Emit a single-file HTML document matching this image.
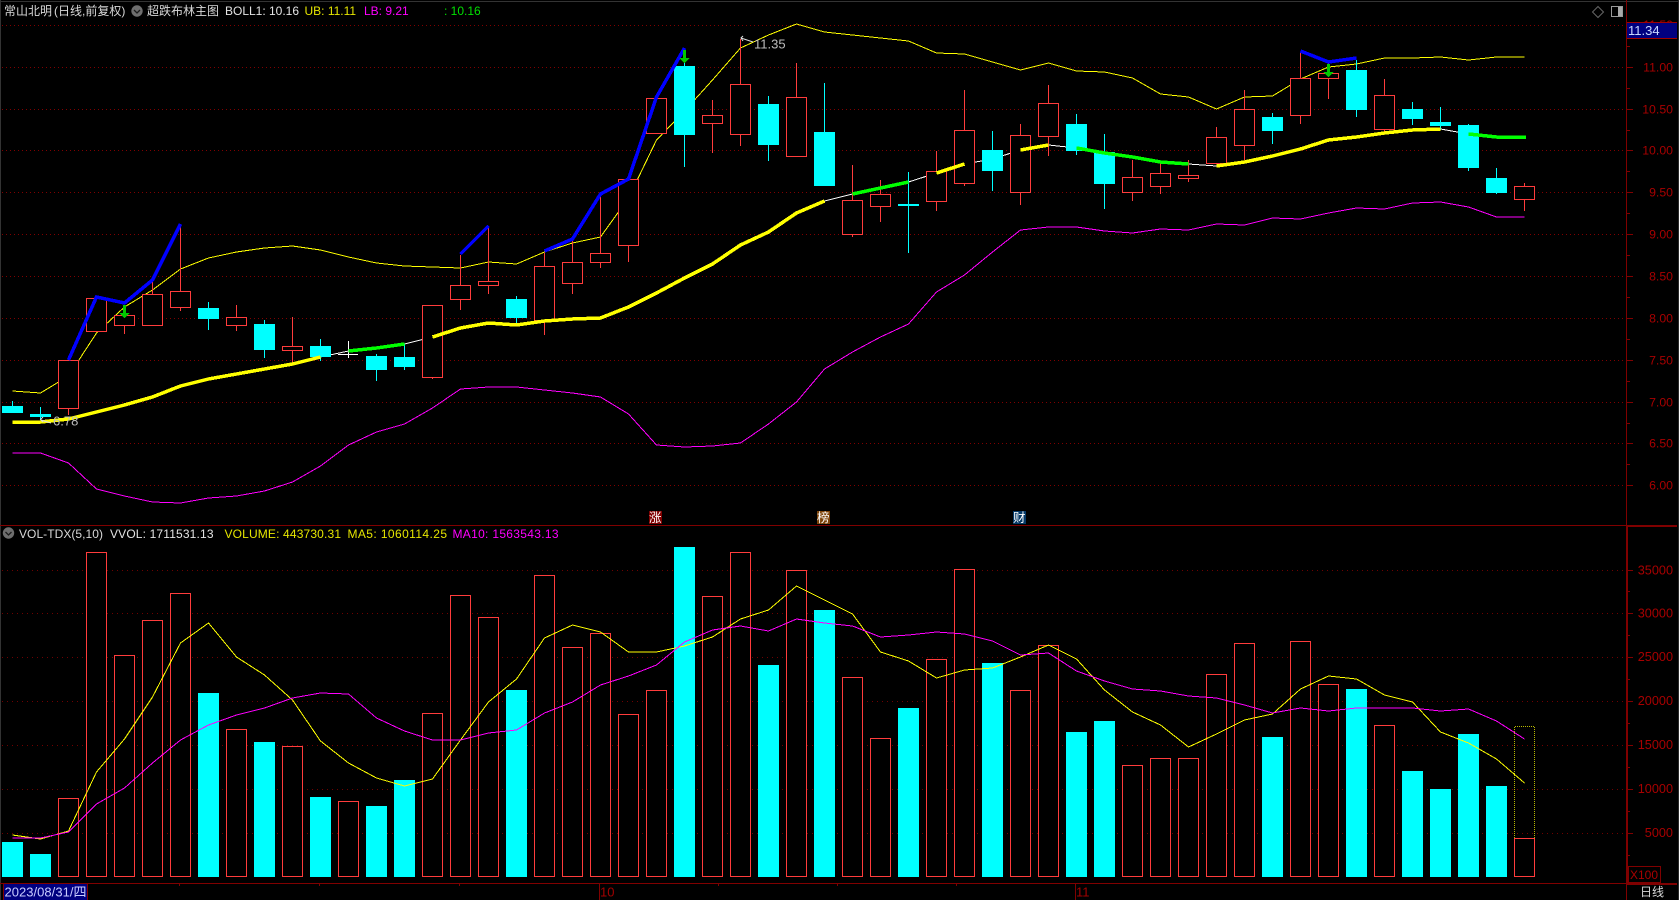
<!DOCTYPE html>
<html lang="zh">
<head>
<meta charset="utf-8">
<title>常山北明 日线</title>
<style>
html,body{margin:0;padding:0;background:#000;width:1679px;height:900px;overflow:hidden}
svg{position:absolute;left:0;top:0;display:block}
text{font-family:"Liberation Sans","Noto Sans CJK SC",sans-serif;font-size:12px}
.ax{fill:#a80000;text-anchor:end;font-size:12.3px}
.av{fill:#a80000;text-anchor:end;font-size:12.7px}
.g{fill:none;stroke-width:1}
.c{shape-rendering:crispEdges}
</style>
</head>
<body>
<svg width="1679" height="900" viewBox="0 0 1679 900" xmlns="http://www.w3.org/2000/svg">
<rect width="1679" height="900" fill="#000"/>
<g class="c">
<rect x="0" y="1" width="1679" height="1" fill="#333"/>
<rect x="0" y="0" width="1" height="900" fill="#333"/>
<rect x="1678" y="0" width="1" height="900" fill="#2a2a2a"/>
<!-- price grid -->
<path d="M2 25.5H1626M2 67.5H1626M2 109.5H1626M2 150.5H1626M2 192.5H1626M2 234.5H1626M2 276.5H1626M2 318.5H1626M2 360.5H1626M2 402.5H1626M2 443.5H1626M2 485.5H1626" stroke="#800000" stroke-width="1" stroke-dasharray="1 3" fill="none"/>
<!-- vol grid -->
<path d="M2 570.5H1626M2 613.5H1626M2 657.5H1626M2 701.5H1626M2 745.5H1626M2 789.5H1626M2 833.5H1626" stroke="#700000" stroke-width="1" stroke-dasharray="1 4" fill="none"/>
<!-- frame -->
<rect x="0" y="525" width="1626" height="1" fill="#800000"/>
<rect x="1626" y="525" width="51" height="2" fill="#800000"/>
<rect x="1626" y="0" width="1" height="525" fill="#800000"/>
<rect x="1626" y="525" width="2" height="359" fill="#800000"/>
<rect x="0" y="883" width="1677" height="1" fill="#800000"/>
<rect x="1626" y="883" width="51" height="2" fill="#800000"/>
<rect x="1626" y="884" width="1" height="16" fill="#800000"/>
<!-- axis ticks -->
<path d="M1627 46.5h3M1627 67.5h6M1627 88.5h3M1627 109.5h6M1627 130.5h3M1627 150.5h6M1627 171.5h3M1627 192.5h6M1627 213.5h3M1627 234.5h6M1627 255.5h3M1627 276.5h6M1627 297.5h3M1627 318.5h6M1627 339.5h3M1627 360.5h6M1627 381.5h3M1627 402.5h6M1627 423.5h3M1627 443.5h6M1627 464.5h3M1627 485.5h6M1627 570.5h6M1627 591.5h3M1627 613.5h6M1627 635.5h3M1627 657.5h6M1627 679.5h3M1627 701.5h6M1627 723.5h3M1627 745.5h6M1627 767.5h3M1627 789.5h6M1627 811.5h3M1627 833.5h6M1627 855.5h3" stroke="#800000" fill="none"/>
<!-- time ticks -->
<path d="M179.5 884v2M319.5 884v2M459.5 884v2M718.5 884v2M837.5 884v2M956.5 884v2M599.5 884v16M1075.5 884v16" stroke="#800000" fill="none"/>
</g>

<!-- thin BOLL lines -->
<g class="c g">
<polyline stroke="#ffff00" fill="none" points="12.5,391 40.5,393 68.5,376 96.5,333 124.5,307 152.5,290 180.5,269 208.5,258 236.5,252 264.5,248 292.5,246 320.5,250 348.5,257 376.5,263 404.5,266 432.5,267 460.5,268 488.5,262 516.5,264 544.5,252 572.5,243 600.5,237 628.5,198 656.5,140 684.5,111 712.5,80 740.5,48 768.5,35 796.5,24 824.5,32 852.5,35 880.5,38 908.5,41 936.5,53 964.5,54 992.5,62 1020.5,70 1048.5,63 1076.5,71 1104.5,72 1132.5,78 1160.5,94 1188.5,97 1216.5,109 1244.5,97 1272.5,96 1300.5,79 1328.5,67 1356.5,64 1384.5,58 1412.5,58 1440.5,57 1468.5,60 1496.5,57 1524.5,57"/>
<polyline stroke="#ff00ff" fill="none" points="12.5,453 40.5,453 68.5,463 96.5,489 124.5,496 152.5,502 180.5,503 208.5,498 236.5,496 264.5,491 292.5,482 320.5,466 348.5,445 376.5,432 404.5,424 432.5,408 460.5,389 488.5,387 516.5,387 544.5,390 572.5,393 600.5,397 628.5,414 656.5,445 684.5,447 712.5,446 740.5,443 768.5,424 796.5,402 824.5,369 852.5,352 880.5,337 908.5,324 936.5,292 964.5,275 992.5,252 1020.5,230 1048.5,227 1076.5,227 1104.5,231 1132.5,233 1160.5,229 1188.5,230 1216.5,224 1244.5,225 1272.5,218 1300.5,219 1328.5,213 1356.5,208 1384.5,209 1412.5,203 1440.5,202 1468.5,207 1496.5,217 1524.5,217"/>
<path d="M320.5 357L348.5 351M404.5 344L432.5 337M824.5 201L852.5 194M908.5 182L936.5 173M964.5 164L992.5 159L1020.5 150M1048.5 145L1076.5 148M1188.5 164L1216.5 166M1440.5 129L1468.5 134" stroke="#fff" fill="none"/>
</g>

<!-- white doji -->
<path class="c" d="M348.5 341V358M338 354.5H358" stroke="#fff" fill="none"/>

<!-- wicks -->
<path class="c" fill="none" stroke="#ff3c3c" d="M68.5 360V415M96.5 298V332M124.5 305V334M152.5 282V326M180.5 224V311M236.5 305V331M292.5 317V363M432.5 305V379M460.5 255V310M488.5 226V294M544.5 253V335M572.5 239V294M600.5 194V268M628.5 179V262M656.5 98V134M712.5 100V153M740.5 39V146M796.5 63V157M852.5 165V237M880.5 180V222M936.5 151V211M964.5 90V186M1020.5 124V205M1048.5 85V156M1132.5 160V201M1160.5 163V194M1188.5 160V182M1216.5 127V164M1244.5 90V160M1300.5 52V124M1328.5 63V99M1384.5 79V132M1524.5 183V211"/>
<path class="c" fill="none" stroke="#00ffff" d="M12.5 401V413M40.5 407V420M208.5 302V330M264.5 320V358M320.5 339V361M376.5 354V381M404.5 344V370M516.5 296V324M684.5 48V167M768.5 96V161M824.5 83V186M908.5 172V253M992.5 131V191M1076.5 114V155M1104.5 134V209M1272.5 113V144M1356.5 60V117M1412.5 102V125M1440.5 107V130M1468.5 124V171M1496.5 168V194"/>

<!-- red bodies -->
<path class="c" fill="#000" stroke="#ff3c3c" d="M58.5 360.5h20v48h-20zM86.5 298.5h20v33h-20zM114.5 315.5h20v10h-20zM142.5 294.5h20v31h-20zM170.5 291.5h20v16h-20zM226.5 317.5h20v8h-20zM282.5 346.5h20v4h-20zM422.5 305.5h20v72h-20zM450.5 285.5h20v14h-20zM478.5 281.5h20v4h-20zM534.5 266.5h20v54h-20zM562.5 262.5h20v21h-20zM590.5 253.5h20v9h-20zM618.5 179.5h20v66h-20zM646.5 98.5h20v35h-20zM702.5 115.5h20v8h-20zM730.5 84.5h20v50h-20zM786.5 97.5h20v59h-20zM842.5 200.5h20v34h-20zM870.5 194.5h20v12h-20zM926.5 171.5h20v30h-20zM954.5 130.5h20v53h-20zM1010.5 135.5h20v57h-20zM1038.5 103.5h20v33h-20zM1122.5 177.5h20v15h-20zM1150.5 173.5h20v13h-20zM1178.5 175.5h20v3h-20zM1206.5 137.5h20v26h-20zM1234.5 109.5h20v36h-20zM1290.5 78.5h20v37h-20zM1318.5 73.5h20v5h-20zM1374.5 95.5h20v34h-20zM1514.5 186.5h20v13h-20z"/>
<!-- cyan bodies -->
<path class="c" fill="#00ffff" d="M2 406h21v7H2zM30 414h21v3H30zM198 308h21v11h-21zM254 324h21v26h-21zM310 346h21v11h-21zM366 356h21v14h-21zM394 357h21v10h-21zM506 299h21v19h-21zM674 66h21v69h-21zM758 104h21v41h-21zM814 132h21v54h-21zM898 204h21v2h-21zM982 150h21v21h-21zM1066 124h21v27h-21zM1094 152h21v32h-21zM1262 117h21v14h-21zM1346 70h21v40h-21zM1402 109h21v10h-21zM1430 122h21v4h-21zM1458 125h21v43h-21zM1486 178h21v15h-21z"/>

<!-- thick mid BOLL segments -->
<g class="c" fill="none" stroke-width="3.5">
<path stroke="#ffff00" d="M12.5 422H40.5L68.5 419L96.5 412L124.5 405L152.5 397L180.5 386L208.5 379L236.5 374L264.5 369L292.5 364L320.5 357M432.5 337L460.5 328L488.5 323L516.5 325L544.5 321L572.5 319L600.5 318L628.5 307L656.5 293L684.5 278L712.5 264L740.5 245L768.5 232L796.5 213L824.5 201M936.5 173L964.5 164M1020.5 150L1048.5 145M1216.5 166L1244.5 162L1272.5 156L1300.5 149L1328.5 140L1356.5 137L1384.5 133L1412.5 130L1440.5 129"/>
<path stroke="#00ff00" d="M348.5 351L376.5 348L404.5 344M852.5 194L880.5 188L908.5 182M1076.5 148L1104.5 153L1132.5 157L1160.5 162L1188.5 164M1468.5 134L1496.5 137L1526 137"/>
<path stroke="#0000ff" d="M68.5 360L96.5 297L124.5 303L152.5 280L180.5 224M460.5 254L488.5 226M544.5 251L572.5 239L600.5 194L628.5 179L656.5 97L684.5 48M1300.5 51L1328.5 62L1356.5 58"/>
</g>

<!-- signal arrows -->
<path class="c" fill="#00c800" d="M123 305h3v8h4l-5.5 5l-5.5 -5h4zM683 50h3v8h4l-5.5 5l-5.5 -5h4zM1327 64h3v8h4l-5.5 5l-5.5 -5h4z"/>

<!-- high/low labels -->
<path fill="none" stroke="#ddd" stroke-width="1" d="M43 417L40.5 419.5L43 422M41 420L51 423M743 36L741 38L743 41M741 38L753 42"/>
<text x="53" y="425.500" fill="#bcbcbc" style="font-size:13px">6.78</text>
<text x="754" y="48.500" fill="#bcbcbc" style="font-size:13px">11.35</text>

<!-- event markers -->
<g>
<rect class="c" x="649" y="511" width="13" height="13" fill="#800000"/>
<text x="649" y="522" fill="#fff" style="font-size:12.5px">涨</text>
<rect class="c" x="817" y="511" width="13" height="13" fill="#7c4208"/>
<text x="817" y="522" fill="#fff" style="font-size:12.5px">榜</text>
<rect class="c" x="1013" y="511" width="13" height="13" fill="#063a68"/>
<text x="1013" y="522" fill="#fff" style="font-size:12.5px">财</text>
</g>

<!-- volume bars -->
<path class="c" fill="#000" stroke="#ff3c3c" d="M58.5 798.5h20V876.5h-20zM86.5 552.5h20V876.5h-20zM114.5 655.5h20V876.5h-20zM142.5 620.5h20V876.5h-20zM170.5 593.5h20V876.5h-20zM226.5 729.5h20V876.5h-20zM282.5 746.5h20V876.5h-20zM338.5 801.5h20V876.5h-20zM422.5 713.5h20V876.5h-20zM450.5 595.5h20V876.5h-20zM478.5 617.5h20V876.5h-20zM534.5 575.5h20V876.5h-20zM562.5 647.5h20V876.5h-20zM590.5 633.5h20V876.5h-20zM618.5 714.5h20V876.5h-20zM646.5 690.5h20V876.5h-20zM702.5 596.5h20V876.5h-20zM730.5 552.5h20V876.5h-20zM786.5 570.5h20V876.5h-20zM842.5 677.5h20V876.5h-20zM870.5 738.5h20V876.5h-20zM926.5 659.5h20V876.5h-20zM954.5 569.5h20V876.5h-20zM1010.5 690.5h20V876.5h-20zM1038.5 645.5h20V876.5h-20zM1122.5 765.5h20V876.5h-20zM1150.5 758.5h20V876.5h-20zM1178.5 758.5h20V876.5h-20zM1206.5 674.5h20V876.5h-20zM1234.5 643.5h20V876.5h-20zM1290.5 641.5h20V876.5h-20zM1318.5 684.5h20V876.5h-20zM1374.5 725.5h20V876.5h-20zM1514.5 838.5h20V876.5h-20z"/>
<path class="c" fill="#00ffff" d="M2 842h21V877H2zM30 854h21V877H30zM198 693h21V877h-21zM254 742h21V877h-21zM310 797h21V877h-21zM366 806h21V877h-21zM394 780h21V877h-21zM506 690h21V877h-21zM674 547h21V877h-21zM758 665h21V877h-21zM814 610h21V877h-21zM898 708h21V877h-21zM982 663h21V877h-21zM1066 732h21V877h-21zM1094 721h21V877h-21zM1262 737h21V877h-21zM1346 689h21V877h-21zM1402 771h21V877h-21zM1430 789h21V877h-21zM1458 734h21V877h-21zM1486 786h21V877h-21z"/>
<!-- dotted estimated volume -->
<path class="c" fill="none" stroke="#b8b800" stroke-dasharray="1 1" d="M1514.5 838V726.5H1534.5V838"/>

<!-- vol MAs -->
<g class="c g">
<polyline stroke="#ffff00" fill="none" points="12.5,835 40.5,839 68.5,831 96.5,772 124.5,739 152.5,697 180.5,643 208.5,623 236.5,657 264.5,675 292.5,700 320.5,741 348.5,763 376.5,778 404.5,786 432.5,779 460.5,740 488.5,702 516.5,679 544.5,638 572.5,625 600.5,632 628.5,652 656.5,652 684.5,646 712.5,637 740.5,619 768.5,610 796.5,586 824.5,600 852.5,614 880.5,652 908.5,661 936.5,678 964.5,670 992.5,668 1020.5,657 1048.5,645 1076.5,659 1104.5,690 1132.5,712 1160.5,725 1188.5,747 1216.5,734 1244.5,720 1272.5,714 1300.5,689 1328.5,676 1356.5,679 1384.5,695 1412.5,702 1440.5,732 1468.5,743 1496.5,759 1524.5,783"/>
<polyline stroke="#ff00ff" fill="none" points="12.5,838 40.5,838 68.5,832 96.5,804 124.5,788 152.5,763 180.5,740 208.5,725 236.5,715 264.5,708 292.5,698 320.5,693 348.5,694 376.5,718 404.5,731 432.5,740 460.5,740 488.5,733 516.5,730 544.5,713 572.5,702 600.5,685 628.5,676 656.5,665 684.5,642 712.5,630 740.5,626 768.5,631 796.5,619 824.5,623 852.5,626 880.5,637 908.5,635 936.5,632 964.5,634 992.5,641 1020.5,655 1048.5,653 1076.5,671 1104.5,681 1132.5,689 1160.5,691 1188.5,696 1216.5,698 1244.5,705 1272.5,713 1300.5,708 1328.5,711 1356.5,708 1384.5,708 1412.5,708 1440.5,711 1468.5,709 1496.5,721 1524.5,739"/>
</g>

<!-- axis labels -->
<text class="ax" x="1673" y="29">11.50</text>
<text class="ax" x="1673" y="71.500">11.00</text>
<text class="ax" x="1673" y="113.500">10.50</text>
<text class="ax" x="1673" y="154.500">10.00</text>
<text class="ax" x="1673" y="196.500">9.50</text>
<text class="ax" x="1673" y="238.500">9.00</text>
<text class="ax" x="1673" y="280.500">8.50</text>
<text class="ax" x="1673" y="322.500">8.00</text>
<text class="ax" x="1673" y="364.500">7.50</text>
<text class="ax" x="1673" y="406.500">7.00</text>
<text class="ax" x="1673" y="447.500">6.50</text>
<text class="ax" x="1673" y="489.500">6.00</text>
<text class="av" x="1673" y="574.500">35000</text>
<text class="av" x="1673" y="617.500">30000</text>
<text class="av" x="1673" y="661">25000</text>
<text class="av" x="1673" y="705">20000</text>
<text class="av" x="1673" y="749">15000</text>
<text class="av" x="1673" y="793">10000</text>
<text class="av" x="1673" y="837">5000</text>

<!-- last price tag -->
<rect class="c" x="1627" y="23" width="50" height="15" fill="#000080"/>
<path class="c" d="M1627 22.5H1677M1627 38.5H1677" stroke="#a00000" fill="none"/>
<text x="1628" y="35" fill="#c8d8ff" style="font-size:13px">11.34</text>

<!-- X100 box -->
<rect class="c" x="1628.5" y="866.5" width="32" height="16" fill="#000" stroke="#800000"/>
<text x="1630" y="879" fill="#a80000">X100</text>

<!-- date -->
<rect class="c" x="3" y="884" width="85" height="16" fill="#000080"/>
<path class="c" d="M3.5 884V900M87.5 884V900" stroke="#800000" fill="none"/>
<text x="4.500" y="896.500" fill="#c8ccff" style="font-size:13px" textLength="82">2023/08/31/四</text>
<text x="600" y="896.500" fill="#a00000" style="font-size:13px">10</text>
<text x="1076" y="896.500" fill="#a00000" style="font-size:13px">11</text>
<text x="1640" y="896" fill="#d8d8d8">日线</text>

<!-- header text -->
<text x="4" y="15" fill="#d8d8d8">常山北明</text>
<text x="54" y="15" fill="#d8d8d8">(日线,前复权)</text>
<circle cx="137" cy="11" r="5.700" fill="#6e6e6e"/>
<path d="M134 10l3 3l3 -3" fill="none" stroke="#1c1c1c" stroke-width="1.300"/>
<text x="147" y="15" fill="#d8d8d8">超跌布林主图</text>
<text x="225" y="15" fill="#e4e4e4" textLength="74">BOLL1: 10.16</text>
<text x="304.500" y="15" fill="#e6e600">UB: 11.11</text>
<text x="364" y="15" fill="#ff00ff">LB: 9.21</text>
<text x="444" y="15" fill="#00e000">: 10.16</text>

<!-- toolbar icons -->
<path d="M1598 6.500l5.500 5.500l-5.500 5.500l-5.500 -5.500z" fill="none" stroke="#666"/>
<rect class="c" x="1611.5" y="6.5" width="11" height="10" fill="#000" stroke="#999"/>
<rect class="c" x="1618" y="7" width="4" height="9" fill="#aaa"/>

<!-- volume header -->
<circle cx="8.500" cy="533" r="5.700" fill="#6e6e6e"/>
<path d="M5.500 532l3 3l3 -3" fill="none" stroke="#1c1c1c" stroke-width="1.300"/>
<text x="19" y="538" fill="#d8d8d8" textLength="84">VOL-TDX(5,10)</text>
<text x="110" y="538" fill="#e4e4e4" textLength="103.500">VVOL: 1711531.13</text>
<text x="224.500" y="538" fill="#e6e600" textLength="116.500">VOLUME: 443730.31</text>
<text x="347.500" y="538" fill="#e6e600" textLength="99.500">MA5: 1060114.25</text>
<text x="452.500" y="538" fill="#ff00ff" textLength="106">MA10: 1563543.13</text>
</svg>
</body>
</html>
